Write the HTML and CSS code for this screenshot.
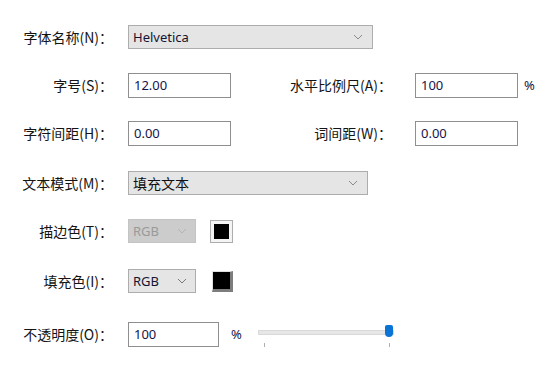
FILE: index.html
```html
<!DOCTYPE html>
<html lang="zh">
<head>
<meta charset="utf-8">
<link rel="stylesheet" href="styles.css">
</head>
<body>
<div class="form">
  <div class="row r1">
    <span class="label">字体名称(N)：</span>
    <div class="select wide"><span>Helvetica</span><svg class="chev" width="10" height="6" viewBox="0 0 10 6"><path d="M1 1 L5 5 L9 1" fill="none" stroke="#8a8a8a" stroke-width="1"/></svg></div>
  </div>
  <div class="row r2">
    <span class="label">字号(S)：</span>
    <div class="input">12.00</div>
    <span class="label2">水平比例尺(A)：</span>
    <div class="input">100</div>
    <span class="unit">%</span>
  </div>
  <div class="row r3">
    <span class="label">字符间距(H)：</span>
    <div class="input">0.00</div>
    <span class="label2">词间距(W)：</span>
    <div class="input">0.00</div>
  </div>
  <div class="row r4">
    <span class="label">文本模式(M)：</span>
    <div class="select mid"><span class="cjk">填充文本</span><svg class="chev" width="10" height="6" viewBox="0 0 10 6"><path d="M1 1 L5 5 L9 1" fill="none" stroke="#8a8a8a" stroke-width="1"/></svg></div>
  </div>
  <div class="row r5">
    <span class="label">描边色(T)：</span>
    <div class="select small disabled"><span>RGB</span><svg class="chev" width="10" height="6" viewBox="0 0 10 6"><path d="M1 1 L5 5 L9 1" fill="none" stroke="#b4b4b4" stroke-width="1"/></svg></div>
    <div class="swatch flat"><div class="chip"></div></div>
  </div>
  <div class="row r6">
    <span class="label">填充色(I)：</span>
    <div class="select small"><span>RGB</span><svg class="chev" width="10" height="6" viewBox="0 0 10 6"><path d="M1 1 L5 5 L9 1" fill="none" stroke="#7a7a7a" stroke-width="1"/></svg></div>
    <div class="swatch raised"></div>
  </div>
  <div class="row r7">
    <span class="label">不透明度(O)：</span>
    <div class="input short">100</div>
    <span class="unit2">%</span>
    <div class="slider">
      <div class="track"></div>
      <div class="thumb"></div>
      <div class="tick t1"></div>
      <div class="tick t2"></div>
    </div>
  </div>
</div>
</body>
</html>
```
FILE: styles.css
```css
html, body {
  margin: 0;
  padding: 0;
  background: #ffffff;
}
body {
  width: 552px;
  height: 367px;
  overflow: hidden;
  font-family: "Noto Sans CJK SC", "Noto Sans", sans-serif;
  font-size: 14px;
  color: #141414;
}
.form {
  padding: 25px 0 0 0;
  display: flex;
  flex-direction: column;
}
.row {
  display: flex;
  align-items: center;
  height: 24px;
}
.r2 { margin-top: 24px; }
.r3 { margin-top: 24px; }
.r4 { margin-top: 26px; }
.r5 { margin-top: 24px; }
.r6 { margin-top: 26px; }
.r7 { margin-top: 29px; }
.label {
  width: 113px;
  text-align: right;
  margin-right: 15px;
  white-space: nowrap;
}
.label2 {
  width: 161px;
  text-align: right;
  margin-right: 23px;
  white-space: nowrap;
}
.select {
  box-sizing: border-box;
  height: 24px;
  border: 1px solid #adadad;
  background: #e5e5e5;
  display: flex;
  align-items: center;
  justify-content: space-between;
  padding: 0 9px 0 4px;
  color: #141432;
  font-family: "Noto Sans", "Noto Sans CJK SC", sans-serif;
  font-size: 13px;
}
.select.wide { width: 245px; }
.select.mid { width: 240px; }
.select.small { width: 68px; padding-right: 8px; }
.select.disabled {
  background: #cccccc;
  border-color: #c4c4c4;
  color: #9a9a9a;
}
.select span { line-height: 1; }
.select .cjk { font-family: "Noto Sans CJK SC", sans-serif; color: #111; font-size: 14px; }
.input {
  box-sizing: border-box;
  width: 103px;
  height: 25px;
  border: 1px solid #8f8f8f;
  background: #fff;
  padding: 0 5px;
  display: flex;
  align-items: center;
  font-family: "Noto Sans", sans-serif;
  font-size: 13px;
  color: #15154a;
}
.input.short { width: 91px; }
.unit {
  margin-left: 6px;
  font-family: "Noto Sans", sans-serif;
  font-size: 13px;
  color: #15154a;
}
.unit2 {
  margin-left: 12px;
  font-family: "Noto Sans", sans-serif;
  font-size: 13px;
  color: #15154a;
  width: 15px;
}
.swatch {
  box-sizing: border-box;
  width: 23px;
  height: 23px;
  margin-left: 14px;
}
.swatch.flat {
  border: 1px solid #adadad;
  background: #f4f4f4;
  padding: 3px;
}
.chip {
  width: 100%;
  height: 100%;
  background: #000;
}
.swatch.raised {
  margin-left: 16px;
  width: 21px;
  height: 21px;
  background: #000;
  border-style: solid;
  border-width: 1px 3px 3px 1px;
  border-color: #e0e0e0 #7d7d7d #7d7d7d #e0e0e0;
}
.slider {
  position: relative;
  width: 136px;
  height: 24px;
  margin-left: 12px;
}
.track {
  position: absolute;
  left: 0;
  right: 0;
  top: 8px;
  height: 3px;
  background: #e7e7e7;
  border: 1px solid #d9d9d9;
}
.thumb {
  position: absolute;
  left: 127px;
  top: 3px;
  width: 8px;
  height: 12px;
  background: #0a74d6;
  border-radius: 2px 2px 4px 4px;
}
.tick {
  position: absolute;
  top: 21px;
  width: 1px;
  height: 4px;
  background: #b0b0b0;
}
.t1 { left: 6px; }
.t2 { left: 131px; }
```
